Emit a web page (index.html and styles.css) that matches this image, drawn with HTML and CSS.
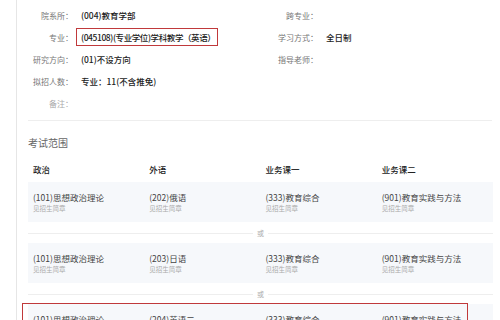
FILE: index.html
```html
<!DOCTYPE html>
<html lang="zh-CN">
<head>
    <meta charset="UTF-8">
    <meta name="viewport" content="width=device-width, initial-scale=1.0">
    <title>招生专业详情</title>
    <link rel="stylesheet" href="styles.css">
</head>
<body>

    <div class="panel">
        <div class="info">
            <div class="info-item"><span class="info-label">院系所：</span><span class="info-value">(004)教育学部</span></div>
            <div class="info-item"><span class="info-label">跨专业：</span><span class="info-value"></span></div>
            <div class="info-item"><span class="info-label">专业：</span><span class="info-value marked">(045108)(专业学位)学科教学（英语）</span></div>
            <div class="info-item"><span class="info-label">学习方式：</span><span class="info-value">全日制</span></div>
            <div class="info-item"><span class="info-label">研究方向：</span><span class="info-value">(01)不设方向</span></div>
            <div class="info-item"><span class="info-label">指导老师：</span><span class="info-value"></span></div>
            <div class="info-item left"><span class="info-label">拟招人数：</span><span class="info-value">专业：11(不含推免)</span></div>
            <div class="info-item left"><span class="info-label light">备注：</span><span class="info-value"></span></div>
        </div>

        <h3 class="section-title">考试范围</h3>

        <div class="exam">
            <div class="exam-head">
                <div class="cell">政治</div>
                <div class="cell">外语</div>
                <div class="cell">业务课一</div>
                <div class="cell">业务课二</div>
            </div>

            <div class="exam-row">
                <div class="cell"><div class="course">(101)思想政治理论</div><div class="note">见招生简章</div></div>
                <div class="cell"><div class="course">(202)俄语</div><div class="note">见招生简章</div></div>
                <div class="cell"><div class="course">(333)教育综合</div><div class="note">见招生简章</div></div>
                <div class="cell"><div class="course">(901)教育实践与方法</div><div class="note">见招生简章</div></div>
            </div>

            <div class="or"><span>或</span></div>

            <div class="exam-row">
                <div class="cell"><div class="course">(101)思想政治理论</div><div class="note">见招生简章</div></div>
                <div class="cell"><div class="course">(203)日语</div><div class="note">见招生简章</div></div>
                <div class="cell"><div class="course">(333)教育综合</div><div class="note">见招生简章</div></div>
                <div class="cell"><div class="course">(901)教育实践与方法</div><div class="note">见招生简章</div></div>
            </div>

            <div class="or"><span>或</span></div>

            <div class="exam-row picked">
                <div class="cell"><div class="course">(101)思想政治理论</div><div class="note">见招生简章</div></div>
                <div class="cell"><div class="course">(204)英语二</div><div class="note">见招生简章</div></div>
                <div class="cell"><div class="course">(333)教育综合</div><div class="note">见招生简章</div></div>
                <div class="cell"><div class="course">(901)教育实践与方法</div><div class="note">见招生简章</div></div>
                <div class="mark-box"></div>
            </div>
        </div>
    </div>

</body>
</html>
```

FILE: styles.css
```css
body {
    font-family: "Noto Sans CJK SC", "Noto Sans", sans-serif;
    background-color: #ffffff;
    margin: 0;
    padding: 0;
    color: #333;
}

.panel {
    margin-left: 16px;
    border-left: 1px solid #e6e6e6;
    padding: 4px 7px 0 11px;
    min-height: 320px;
}

.info {
    display: grid;
    grid-template-columns: 245px 1fr;
    padding-bottom: 6px;
    border-bottom: 1px solid #eeeeee;
    margin-right: 1px;
}

.info-item {
    display: flex;
    align-items: center;
    height: 22px;
}

.info-item.left {
    grid-column: 1;
}

.info-label {
    width: 45px;
    margin-right: 8px;
    text-align: right;
    font-size: 8px;
    color: #777;
    white-space: nowrap;
}

.info-label.light {
    color: #aaa;
}

.info-value {
    font-size: 8.5px;
    font-weight: 500;
    color: #222;
    white-space: nowrap;
}

.info-value.marked {
    margin-left: -5px;
    padding: 2px 2px 2px 4px;
    border: 1px solid #c0393b;
    letter-spacing: -0.4px;
}

.section-title {
    margin: 15px 0 0 0;
    font-size: 10px;
    line-height: 14px;
    font-weight: normal;
    color: #666;
}

.exam-head {
    display: grid;
    grid-template-columns: repeat(4, 1fr);
    margin-top: 9px;
    height: 20px;
    align-items: center;
    margin-bottom: 3px;
}

.exam-head .cell {
    font-size: 8.5px;
    font-weight: 500;
    color: #222;
}

.cell {
    padding-left: 5px;
    white-space: nowrap;
}

.exam-row {
    position: relative;
    display: grid;
    grid-template-columns: repeat(4, 1fr);
    padding: 9px 0;
    background-color: #f6f8fb;
}

.course {
    font-size: 8.5px;
    line-height: 12px;
    color: #444;
}

.note {
    font-size: 6.5px;
    line-height: 10px;
    color: #aaa;
}

.or {
    display: flex;
    align-items: center;
    justify-content: center;
    height: 21px;
    position: relative;
}

.or::before {
    content: "";
    position: absolute;
    left: 0;
    right: 0;
    top: 11px;
    border-top: 1px solid #eeeeee;
}

.or span {
    position: relative;
    padding: 0 4px;
    background-color: #ffffff;
    font-size: 7px;
    color: #aaa;
}

.mark-box {
    position: absolute;
    left: -6px;
    top: -1px;
    width: 444px;
    height: 60px;
    border: 1px solid #c0393b;
}
```
